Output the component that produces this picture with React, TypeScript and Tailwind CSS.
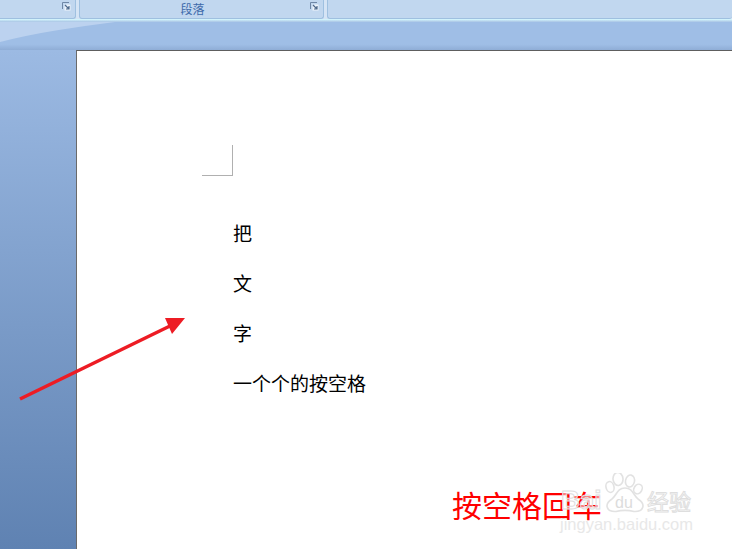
const cjk = "font-['Noto_Sans_CJK_SC','Liberation_Sans',sans-serif]";

function DialogLauncher() {
    return (
        <svg width="9" height="9" viewBox="0 0 9 9" className="absolute right-[4px] top-[2px]">
            <path d="M0.5 7V0.5H7" stroke="#6f87a6" strokeWidth="1" fill="none" />
            <rect x="2.5" y="2.5" width="6" height="6" fill="#eef4fb" />
            <path d="M3 3L7 7M7 4V7H4" stroke="#4f6a8c" strokeWidth="1.2" fill="none" />
        </svg>
    );
}

function RibbonGroup({ className, label, launcher }: { className: string; label?: string; launcher?: boolean }) {
    return (
        <div className={`relative h-[19px] rounded-b-[3px] border-b border-x border-[#9fc0e0] bg-[#c1d7ef] ${className}`}>
            {label && (
                <div className={`${cjk} pr-[18px] text-center text-[12px] leading-[18px] text-[#3e6aaa]`}>{label}</div>
            )}
            {launcher && <DialogLauncher />}
        </div>
    );
}

function Watermark() {
    return (
        <div className="absolute left-[560px] top-[473px] h-[62px] w-[135px]">
            <svg width="135" height="62" viewBox="0 0 135 62" className="absolute left-0 top-0">
                <g fill="none" stroke="#e2e2e2" strokeWidth="1.6">
                    <ellipse cx="58" cy="6" rx="5" ry="6.5" transform="rotate(-5 58 6)" />
                    <ellipse cx="70" cy="8" rx="4.5" ry="6" transform="rotate(12 70 8)" />
                    <ellipse cx="78" cy="16" rx="4" ry="5" transform="rotate(30 78 16)" />
                    <ellipse cx="50" cy="14" rx="4" ry="5.5" transform="rotate(-15 50 14)" />
                    <path d="M65 15C57 15 57 22 52 26C44 31 46 39 56 38.500C62 37 68 37 74 38.500C84 39 86 31 78 26C73 22 73 15 65 15Z" />
                </g>
            </svg>
            <span className="absolute left-[1px] top-[12px] font-['Liberation_Sans',sans-serif] text-[26px] font-bold leading-[30px] text-white/50 [-webkit-text-stroke:1px_#dedede]">
                Bai
            </span>
            <span className="absolute left-[55px] top-[21px] font-['Liberation_Sans',sans-serif] text-[16px] leading-[18px] text-[#dcdcdc]">
                du
            </span>
            <span className={`${cjk} absolute left-[87px] top-[13px] text-[22px] leading-[28px] text-white [-webkit-text-stroke:1px_#dedede]`}>
                经验
            </span>
            <span className="absolute left-0 top-[41px] whitespace-nowrap font-['Liberation_Sans',sans-serif] text-[16.5px] leading-[20px] text-[#e8e8e8]">
                jingyan.baidu.com
            </span>
        </div>
    );
}

export default function App() {
    return (
        <div className="relative flex h-[549px] w-[732px] flex-col overflow-hidden bg-[#9fbee6]">
            {/* Ribbon bottom */}
            <div className="flex h-[19px] gap-[3px] bg-[#d5e4f5] pl-0">
                <RibbonGroup className="w-[76px] rounded-bl-none border-l-0" launcher />
                <RibbonGroup className="w-[245px]" label="段落" launcher />
                <RibbonGroup className="flex-1 border-r-0" />
            </div>
            <div className="h-[3px] bg-gradient-to-b from-[#d9fbff] to-[#a9c4e4]" />

            {/* Workspace */}
            <div className="relative flex flex-1 flex-col">
                <svg width="120" height="24" viewBox="0 0 120 24" className="absolute left-0 top-0">
                    <path d="M0 0H115C75 5 35 11 0 20Z" fill="#bcd2ef" />
                </svg>
                <div className="h-[28px] bg-gradient-to-b from-transparent from-80% to-[#8fadd6]" />
                <div className="flex flex-1">
                    <div className="w-[76px] bg-gradient-to-b from-[#9cbae3] to-[#5f82b2]" />
                    <div className="relative flex-1 border-l border-t border-l-[#6a6a6a] border-t-[#5e5e5e] bg-white pl-[156px] pt-[94px]">
                        {/* Margin crop mark */}
                        <div className="ml-[-31px] h-[31px] w-[31px] border-b border-r border-[#b0b0b0]" />
                        <div className={`${cjk} mt-[32px] text-[19px] leading-[50px] text-black`}>
                            <p>把</p>
                            <p>文</p>
                            <p>字</p>
                            <p>一个个的按空格</p>
                        </div>
                    </div>
                </div>
            </div>

            <svg width="732" height="549" viewBox="0 0 732 549" className="pointer-events-none absolute left-0 top-0">
                <path d="M20 399L172 325" stroke="#ed1c24" strokeWidth="3.500" fill="none" />
                <path d="M165 318L185 318L172 334Z" fill="#ed1c24" />
            </svg>

            <div className={`${cjk} absolute left-[452px] top-[483px] text-[30px] leading-[42px] text-[#ff0000]`}>
                按空格回车
            </div>
            <Watermark />
        </div>
    );
}
